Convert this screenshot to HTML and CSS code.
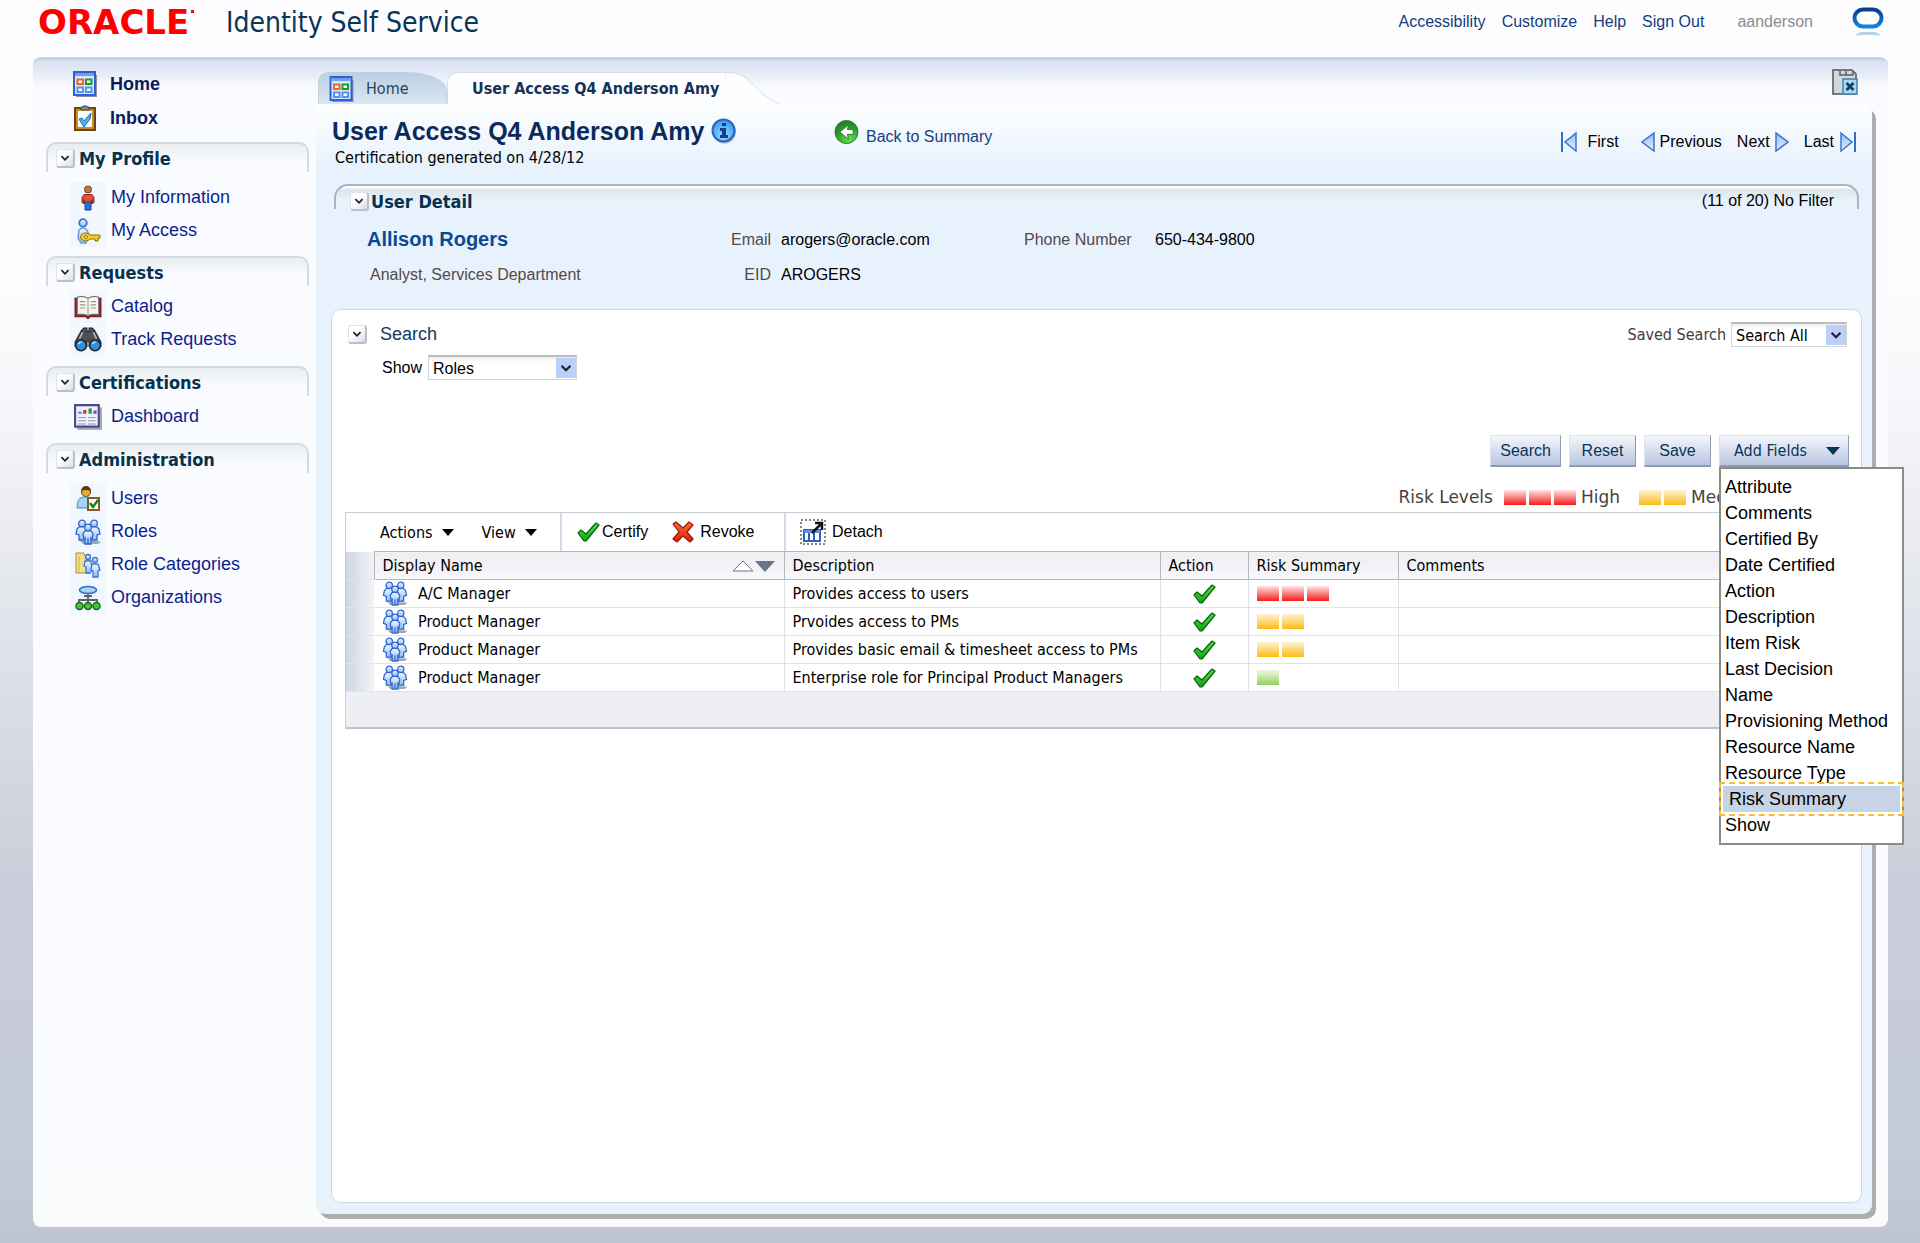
FILE: index.html
```
<!DOCTYPE html>
<html lang="en">
<head>
    <meta charset="UTF-8">
    <meta name="viewport" content="width=device-width, initial-scale=1.0">
    <title>Identity Self Service</title>
    <link rel="stylesheet" href="styles.css">
</head>
<body>
    <!-- Icon sprite -->
    <svg class="sprite" aria-hidden="true">
        <defs>
            <linearGradient id="g-blue" x1="0" y1="0" x2="0" y2="1"><stop offset="0" stop-color="#8fbcf5"/><stop offset="1" stop-color="#e6f2ff"/></linearGradient>
            <linearGradient id="g-person" x1="0" y1="0" x2="0" y2="1"><stop offset="0" stop-color="#f2f8ff"/><stop offset="1" stop-color="#8db8f5"/></linearGradient>
            <linearGradient id="g-green" x1="0" y1="0" x2="0" y2="1"><stop offset="0" stop-color="#56e04a"/><stop offset="1" stop-color="#0aa810"/></linearGradient>
            <linearGradient id="g-red" x1="0" y1="0" x2="0" y2="1"><stop offset="0" stop-color="#ff6a3c"/><stop offset="1" stop-color="#d91e05"/></linearGradient>
            <linearGradient id="g-ring" x1="0" y1="0" x2="0" y2="1"><stop offset="0" stop-color="#0a3f90"/><stop offset="1" stop-color="#1283e0"/></linearGradient>
            <radialGradient id="g-info" cx=".5" cy=".7" r=".7"><stop offset="0" stop-color="#8fdcff"/><stop offset="1" stop-color="#3a93ee"/></radialGradient>
            <radialGradient id="g-back" cx=".6" cy=".8" r=".9"><stop offset="0" stop-color="#6fdc58"/><stop offset=".6" stop-color="#259a2a"/><stop offset="1" stop-color="#2d6e2e"/></radialGradient>
        </defs>
        <symbol id="i-chevron" viewBox="0 0 18 18"><path d="M5 7l4 4 4-4" fill="none" stroke="#222" stroke-width="2"/></symbol>
        <symbol id="i-home" viewBox="0 0 24 26">
            <path d="M3 4h21v22H3z" fill="#8d93a3"/>
            <path d="M1 1h21v23H1z" fill="#d9e7fd" stroke="#2a62d2" stroke-width="2"/>
            <path d="M2 2h19v3H2z" fill="#6d9df0"/>
            <path d="M4.500 8.500h5.500v4.500H4.500z" fill="#fff" stroke="#f0641e" stroke-width="2"/>
            <path d="M13 8.500h5.500v4.500H13z" fill="#fff" stroke="#1f9a28" stroke-width="2"/>
            <path d="M4.500 16.500h5.500v4.500H4.500zM13 16.500h5.500v4.500H13z" fill="#fff" stroke="#5b8ff0" stroke-width="2"/>
        </symbol>
        <symbol id="i-inbox" viewBox="0 0 24 26">
            <path d="M2 3h20v22H2z" fill="#c98a2c" stroke="#6b4512" stroke-width="2"/>
            <path d="M5 6h14v16H5z" fill="#fbfdff"/>
            <path d="M8 5V2h2V1h4v1h2v3z" fill="#7f858d" stroke="#4a4e55"/>
            <path d="M6 14l3-1 2 3 7-8-1 6-6 8z" fill="#4fb0ea" stroke="#1c6fb5"/>
        </symbol>
        <symbol id="i-person" viewBox="0 0 24 26">
            <circle cx="12" cy="4.500" r="3.500" fill="#c07c3c" stroke="#6b3b16"/>
            <path d="M8 9.500h8l2 3v5l-2 1v-4 4H8v-4 4l-2-1v-5z" fill="#e0503a" stroke="#8f2612"/>
            <path d="M9 17h6v8H9z" fill="#2b6fd0" stroke="#1a468c"/>
        </symbol>
        <symbol id="i-key" viewBox="0 0 26 26">
            <circle cx="8" cy="5" r="3.800" fill="url(#g-person)" stroke="#3e74c9" stroke-width="1.800"/>
            <path d="M4 12q4-4 8 0l2 5-3 8H6l-3-5z" fill="url(#g-person)" stroke="#6a9be2" stroke-width="1.500"/>
            <path d="M15 17h10v3h-2v3h-3v-2h-5a5 4 0 1 1 0-4z" fill="#f4cf1c" stroke="#8d6b06"/>
            <circle cx="11" cy="19" r="1.500" fill="#fff" stroke="#8d6b06"/>
        </symbol>
        <symbol id="i-book" viewBox="0 0 26 24">
            <path d="M1 4h2l10 2 10-2h2v17H15l-2 2-2-2H1z" fill="#a8222a" stroke="#6f1218"/>
            <path d="M3 3q6-2 10 1 4-3 10-1v16q-6-1-10 1-4-2-10-1z" fill="#f7f6f1" stroke="#6a6660"/>
            <path d="M13 4v16M5.500 7h5M5.500 10h5M5.500 13h5M15.500 7h5M15.500 10h5M15.500 13h5" stroke="#9a968e"/>
        </symbol>
        <symbol id="i-binoculars" viewBox="0 0 26 24">
            <path d="M7 3l2-2h3v3h2V1h3l2 2 6 11v4H14v-5h-2v5H1v-4z" fill="#4b4f56" stroke="#1e2024"/>
            <path d="M8 5l-3 6M18 5l3 6" stroke="#b3b8c0" stroke-width="1.500"/>
            <circle cx="6.500" cy="17" r="5" fill="#2f8fe6" stroke="#26292e" stroke-width="1.500"/>
            <circle cx="19.500" cy="17" r="5" fill="#2f8fe6" stroke="#26292e" stroke-width="1.500"/>
            <path d="M4 16a3 3 0 0 1 3-2M17 16a3 3 0 0 1 3-2" fill="none" stroke="#a8dcff" stroke-width="1.500"/>
        </symbol>
        <symbol id="i-dashboard" viewBox="0 0 26 24">
            <path d="M3 3h23v21H3z" fill="#a9a9b2"/>
            <path d="M1 1h22v20H1z" fill="#eef0fb" stroke="#4d4a8c" stroke-width="2"/>
            <path d="M4 8h3" stroke="#3a8be0" stroke-width="2"/><path d="M8.500 5.500h3V9h-3z" fill="#d63c1e"/><path d="M13.500 4h3v5h-3z" fill="#2c9c38"/><path d="M18 6h3v3h-3z" fill="#7a4ac8"/>
            <path d="M4 12.500h7M13 12.500h7M4 15.500h7M13 15.500h7M4 18.500h7M13 18.500h7" stroke="#9396bd"/>
        </symbol>
        <symbol id="i-user" viewBox="0 0 26 26">
            <circle cx="11" cy="6" r="4.500" fill="#f0a636" stroke="#6e3f12"/>
            <path d="M6 5a5 5 0 0 1 10 0q-5-2-10 0z" fill="#5e3710"/>
            <path d="M2 22q0-10 6-11h6l3 3v8z" fill="#a5d3f7" stroke="#3f8bcb"/>
            <path d="M13 12h11v12H13z" fill="#fff" stroke="#8a5a1c" stroke-width="2"/>
            <path d="M15 17l3 4 5-7" fill="none" stroke="#14851c" stroke-width="2.500"/>
        </symbol>
        <symbol id="i-roles" viewBox="0 0 26 26">
            <path d="M5 22h18l3 1-3 2H8z" fill="#a4a6b0"/>
            <g fill="url(#g-person)" stroke="#2c66cf" stroke-width="1.300">
                <path d="M4 8q3-1 6 0l2 4-2 9H4v-5l-3-1 1-5z"/>
                <path d="M22 8q-3-1-6 0l-2 4 2 9h6v-5l3-1-1-5z"/>
                <circle cx="7" cy="4.500" r="3.300"/><circle cx="19" cy="4.500" r="3.300"/>
                <path d="M10 12q3-1 6 0l2 3-1 5-1-1v6h-6v-6l-1 1-1-5z"/>
                <circle cx="13" cy="8.500" r="3.300"/>
                <path d="M13 19v6"/>
            </g>
        </symbol>
        <symbol id="i-category" viewBox="0 0 26 26">
            <path d="M1 3V1h8v2h6v18H1z" fill="#f1e089" stroke="#a8923a"/>
            <path d="M4 4v17" stroke="#cdb85a"/>
            <g fill="url(#g-person)" stroke="#3a74d2" stroke-width="1.300">
                <circle cx="13" cy="5" r="2.500"/><path d="M10 9h6l1 9-2 3h-4v-6l-2-1z"/>
                <circle cx="20" cy="8" r="2.500"/><path d="M17 12h6l2 6-2 1v6h-5v-6l-2-1z"/>
            </g>
        </symbol>
        <symbol id="i-org" viewBox="0 0 26 26">
            <path d="M13 8v10M4 19v-4h18v4M9 11h8" fill="none" stroke="#5e6268" stroke-width="1.800"/>
            <ellipse cx="13" cy="5" rx="8.500" ry="3.500" fill="#a9cffb" stroke="#2f6cc4" stroke-width="1.500"/>
            <g fill="#4ec13f" stroke="#146b16" stroke-width="1.500"><circle cx="4.500" cy="21" r="3.500"/><circle cx="13" cy="21" r="3.500"/><circle cx="21.500" cy="21" r="3.500"/></g>
        </symbol>
        <symbol id="i-info" viewBox="0 0 26 26">
            <circle cx="13.500" cy="14" r="11.500" fill="#b4b9c4"/>
            <circle cx="12.500" cy="12.500" r="11" fill="url(#g-info)" stroke="#2468c0" stroke-width="2"/>
            <path d="M11 5h4v3h-4zM9 10h6v7h2v3H9v-3h2v-4H9z" fill="#12408e"/>
        </symbol>
        <symbol id="i-back" viewBox="0 0 26 26">
            <circle cx="13" cy="13" r="12" fill="url(#g-back)" stroke="#2b7f2c"/>
            <path d="M15 5.500L6 13l9 7.500-1-5h6v-5h-6z" fill="#fff" stroke="#1d7a22"/>
        </symbol>
        <symbol id="i-first" viewBox="0 0 18 22"><path d="M2 1v20" stroke="#2f6fd0" stroke-width="2"/><path d="M16 2v18L5 11z" fill="url(#g-blue)" stroke="#3a74cf" stroke-width="1.500"/></symbol>
        <symbol id="i-prev" viewBox="0 0 14 22"><path d="M13 2v18L1 11z" fill="url(#g-blue)" stroke="#3a74cf" stroke-width="1.500"/></symbol>
        <symbol id="i-next" viewBox="0 0 14 22"><path d="M1 2v18l12-9z" fill="url(#g-blue)" stroke="#3a74cf" stroke-width="1.500"/></symbol>
        <symbol id="i-last" viewBox="0 0 18 22"><path d="M16 1v20" stroke="#2f6fd0" stroke-width="2"/><path d="M2 2v18l11-9z" fill="url(#g-blue)" stroke="#3a74cf" stroke-width="1.500"/></symbol>
        <symbol id="i-check" viewBox="0 0 24 20"><path d="M2 11l3-3 5 4 10-11 3 2L10 19H8z" fill="url(#g-green)" stroke="#0b5f10" stroke-width="1.200" stroke-linejoin="round"/></symbol>
        <symbol id="i-cross" viewBox="0 0 22 22"><path d="M1 3l3-2 7 6 6-6 4 3-6 7 6 7-3 3-7-6-6 6-4-3 6-7z" fill="url(#g-red)" stroke="#a01505" stroke-width="1.200" stroke-linejoin="round"/></symbol>
        <symbol id="i-detach" viewBox="0 0 26 26">
            <path d="M1 1h24v24H1z" fill="none" stroke="#111" stroke-dasharray="2 2"/>
            <path d="M4 11h16v11H4z" fill="#fff" stroke="#2b62c8" stroke-width="2"/><path d="M4 11h16v3H4z" fill="#5c92ea"/>
            <path d="M9 14v8M14 14v8M4 22h16" stroke="#2b62c8" stroke-width="2"/>
            <path d="M12 14l9-9M15 4h7v7" fill="none" stroke="#111" stroke-width="2.500"/>
        </symbol>
        <symbol id="i-close" viewBox="0 0 26 26">
            <path d="M1 1h19l4 4v20H1z" fill="#d5d7da" stroke="#4c5560" stroke-width="1.500"/>
            <path d="M8 2v4h13V2M14 2v4" fill="none" stroke="#59616b" stroke-width="1.500"/>
            <path d="M11 10h14v15H11z" fill="#a9d7f4" stroke="#4181b4" stroke-width="1.500"/>
            <path d="M14.500 14l7 7M21.500 14l-7 7" stroke="#123f6b" stroke-width="2.800"/>
        </symbol>
    </svg>

    <header class="header">
        <div class="logo">ORACLE<span class="logo-dot"></span></div>
        <h1 class="app-title">Identity Self Service</h1>
        <nav class="top-links">
            <a href="#">Accessibility</a>
            <a href="#">Customize</a>
            <a href="#">Help</a>
            <a href="#">Sign Out</a>
        </nav>
        <span class="user-name">aanderson</span>
        <svg class="ring" viewBox="0 0 32 32">
            <rect x="2.500" y="3.500" width="27" height="17" rx="8.500" fill="#fff" stroke="url(#g-ring)" stroke-width="4"/>
            <path d="M3 30q3-4 8-4h10q5 0 8 4-3-1-8-1H11q-5 0-8 1z" fill="#b5d2e6"/>
        </svg>
    </header>

    <div class="shell">
        <aside class="sidebar">
            <ul class="nav-list nav-main">
                <li><a href="#"><svg class="nav-icon"><use href="#i-home"/></svg>Home</a></li>
                <li><a href="#"><svg class="nav-icon"><use href="#i-inbox"/></svg>Inbox</a></li>
            </ul>

            <section class="nav-section roomy">
                <h2 class="section-title"><button class="toggle" aria-label="Collapse My Profile"><svg><use href="#i-chevron"/></svg></button>My Profile</h2>
                <ul class="nav-list">
                    <li><a href="#"><svg class="nav-icon tinted"><use href="#i-person"/></svg>My Information</a></li>
                    <li><a href="#"><svg class="nav-icon tinted"><use href="#i-key"/></svg>My Access</a></li>
                </ul>
            </section>

            <section class="nav-section">
                <h2 class="section-title"><button class="toggle" aria-label="Collapse Requests"><svg><use href="#i-chevron"/></svg></button>Requests</h2>
                <ul class="nav-list">
                    <li><a href="#"><svg class="nav-icon tinted"><use href="#i-book"/></svg>Catalog</a></li>
                    <li><a href="#"><svg class="nav-icon tinted"><use href="#i-binoculars"/></svg>Track Requests</a></li>
                </ul>
            </section>

            <section class="nav-section">
                <h2 class="section-title"><button class="toggle" aria-label="Collapse Certifications"><svg><use href="#i-chevron"/></svg></button>Certifications</h2>
                <ul class="nav-list">
                    <li><a href="#"><svg class="nav-icon"><use href="#i-dashboard"/></svg>Dashboard</a></li>
                </ul>
            </section>

            <section class="nav-section roomy">
                <h2 class="section-title"><button class="toggle" aria-label="Collapse Administration"><svg><use href="#i-chevron"/></svg></button>Administration</h2>
                <ul class="nav-list">
                    <li><a href="#"><svg class="nav-icon tinted"><use href="#i-user"/></svg>Users</a></li>
                    <li><a href="#"><svg class="nav-icon tinted"><use href="#i-roles"/></svg>Roles</a></li>
                    <li><a href="#"><svg class="nav-icon tinted"><use href="#i-category"/></svg>Role Categories</a></li>
                    <li><a href="#"><svg class="nav-icon tinted"><use href="#i-org"/></svg>Organizations</a></li>
                </ul>
            </section>
        </aside>

        <main class="main">
            <div class="tabs">
                <a class="tab" href="#"><svg class="tab-icon"><use href="#i-home"/></svg>Home</a>
                <a class="tab active" href="#">User Access Q4 Anderson Amy</a>
                <svg class="tab-tail" viewBox="0 0 56 33"><path d="M0 .5C16 .5 20 5 28 13S46 31 56 32.500H0z" fill="#fdfeff"/><path d="M0 .5C16 .5 20 5 28 13S46 31 56 32.500" fill="none" stroke="#d3dde8"/></svg>
                <button class="icon-btn" aria-label="Close tab"><svg><use href="#i-close"/></svg></button>
            </div>

            <div class="pane">
                <div class="pane-head">
                    <div>
                        <h2 class="page-title">User Access Q4 Anderson Amy <svg><use href="#i-info"/></svg></h2>
                        <p class="subtitle">Certification generated on 4/28/12</p>
                    </div>
                    <a class="back" href="#"><svg><use href="#i-back"/></svg><span>Back to Summary</span></a>
                    <nav class="pager">
                        <a class="pager-first" href="#"><svg class="wide"><use href="#i-first"/></svg>First</a>
                        <a href="#"><svg><use href="#i-prev"/></svg>Previous</a>
                        <a href="#">Next<svg><use href="#i-next"/></svg></a>
                        <a href="#">Last<svg class="wide"><use href="#i-last"/></svg></a>
                    </nav>
                </div>

                <section class="detail">
                    <div class="detail-head">
                        <button class="toggle" aria-label="Collapse User Detail"><svg><use href="#i-chevron"/></svg></button>
                        <h3>User Detail</h3>
                        <span class="counter">(11 of 20) No Filter</span>
                    </div>
                    <div class="detail-grid">
                        <strong class="person">Allison Rogers</strong>
                        <span class="label">Email</span><span>arogers@oracle.com</span>
                        <span class="label phone">Phone Number</span><span>650-434-9800</span>
                        <span class="role">Analyst, Services Department</span>
                        <span class="label">EID</span><span>AROGERS</span>
                    </div>
                </section>

                <section class="card">
                    <div class="search-row">
                        <button class="toggle" aria-label="Collapse Search"><svg><use href="#i-chevron"/></svg></button>
                        <h3>Search</h3>
                        <label for="saved">Saved Search</label>
                        <span class="select saved">
                            <select id="saved"><option>Search All</option></select>
                            <svg><use href="#i-chevron"/></svg>
                        </span>
                    </div>
                    <div class="show-row">
                        <label for="show">Show</label>
                        <span class="select">
                            <select id="show"><option>Roles</option></select>
                            <svg><use href="#i-chevron"/></svg>
                        </span>
                    </div>

                    <div class="actions">
                        <button class="btn">Search</button>
                        <button class="btn">Reset</button>
                        <button class="btn">Save</button>
                        <div class="dropdown">
                            <button class="btn btn-menu" aria-expanded="true">Add Fields <i class="arrow"></i></button>
                            <ul class="menu">
                                <li><button>Attribute</button></li>
                                <li><button>Comments</button></li>
                                <li><button>Certified By</button></li>
                                <li><button>Date Certified</button></li>
                                <li><button>Action</button></li>
                                <li><button>Description</button></li>
                                <li><button>Item Risk</button></li>
                                <li><button>Last Decision</button></li>
                                <li><button>Name</button></li>
                                <li><button>Provisioning Method</button></li>
                                <li><button>Resource Name</button></li>
                                <li><button>Resource Type</button></li>
                                <li><button class="selected">Risk Summary</button></li>
                                <li><button>Show</button></li>
                            </ul>
                        </div>
                    </div>

                    <div class="legend">
                        <span>Risk Levels</span>
                        <span class="risk high"><i></i><i></i><i></i></span><span>High</span>
                        <span class="risk medium"><i></i><i></i></span><span>Medium</span>
                    </div>

                    <div class="grid-panel">
                        <div class="toolbar">
                            <div class="tool-group menus">
                                <button>Actions <i class="arrow"></i></button>
                                <button>View <i class="arrow"></i></button>
                            </div>
                            <div class="tool-group decisions">
                                <button><svg class="check"><use href="#i-check"/></svg>Certify</button>
                                <button><svg class="cross"><use href="#i-cross"/></svg>Revoke</button>
                            </div>
                            <div class="tool-group">
                                <button><svg class="detach"><use href="#i-detach"/></svg>Detach</button>
                            </div>
                        </div>
                        <table>
                            <colgroup>
                                <col class="c-handle"><col class="c-name"><col class="c-desc"><col class="c-action"><col class="c-risk"><col>
                            </colgroup>
                            <thead>
                                <tr>
                                    <td class="handle"></td>
                                    <th><div class="sortable">Display Name
                                        <svg class="sort" viewBox="0 0 44 12"><path d="M1 11L11 1l10 10z" fill="#fff" stroke="#6a7585"/><path d="M23 1h20L33 12z" fill="#67758a"/></svg></div></th>
                                    <th>Description</th>
                                    <th>Action</th>
                                    <th>Risk Summary</th>
                                    <th>Comments</th>
                                </tr>
                            </thead>
                            <tbody>
                                <tr>
                                    <td class="handle"></td>
                                    <td><div class="name"><svg><use href="#i-roles"/></svg>A/C Manager</div></td>
                                    <td>Provides access to users</td>
                                    <td class="center"><svg class="check"><use href="#i-check"/></svg></td>
                                    <td><span class="risk high"><i></i><i></i><i></i></span></td>
                                    <td></td>
                                </tr>
                                <tr>
                                    <td class="handle"></td>
                                    <td><div class="name"><svg><use href="#i-roles"/></svg>Product Manager</div></td>
                                    <td>Prvoides access to PMs</td>
                                    <td class="center"><svg class="check"><use href="#i-check"/></svg></td>
                                    <td><span class="risk medium"><i></i><i></i></span></td>
                                    <td></td>
                                </tr>
                                <tr>
                                    <td class="handle"></td>
                                    <td><div class="name"><svg><use href="#i-roles"/></svg>Product Manager</div></td>
                                    <td>Provides basic email &amp; timesheet access to PMs</td>
                                    <td class="center"><svg class="check"><use href="#i-check"/></svg></td>
                                    <td><span class="risk medium"><i></i><i></i></span></td>
                                    <td></td>
                                </tr>
                                <tr>
                                    <td class="handle"></td>
                                    <td><div class="name"><svg><use href="#i-roles"/></svg>Product Manager</div></td>
                                    <td>Enterprise role for Principal Product Managers</td>
                                    <td class="center"><svg class="check"><use href="#i-check"/></svg></td>
                                    <td><span class="risk low"><i></i></span></td>
                                    <td></td>
                                </tr>
                            </tbody>
                        </table>
                        <div class="grid-footer"></div>
                    </div>
                </section>
            </div>
        </main>
    </div>
</body>
</html>
```
FILE: styles.css
```
* {
    margin: 0;
    padding: 0;
    box-sizing: border-box;
}

:root {
    --arial: "Liberation Sans", Arial, sans-serif;
    --tahoma: "DejaVu Sans Condensed", Tahoma, sans-serif;
}

body {
    display: flex;
    flex-direction: column;
    min-height: 100vh;
    font-family: var(--arial);
    font-size: 16px;
    color: #000;
    background: linear-gradient(#fdfdff 22%, #f5f6f9 33%, #c8cdd9 72%, #c6cbd8 92%, #bfc4d2 100%);
}

ul {
    list-style: none;
}

a {
    color: #0b2f87;
    text-decoration: none;
}

button, select {
    font: inherit;
    color: inherit;
    border: none;
    background: none;
    cursor: pointer;
}

svg {
    display: block;
    flex: none;
}

.sprite {
    position: absolute;
    width: 0;
    height: 0;
}

/* Header */
.header {
    display: flex;
    align-items: center;
    height: 57px;
    padding: 0 36px 13px 38px;
}

.logo {
    display: flex;
    width: 188px;
    font-family: "DejaVu Sans", Verdana, sans-serif;
    font-size: 34px;
    font-weight: bold;
    color: #f00;
}

.logo-dot {
    width: 3px;
    height: 3px;
    margin: 8px 0 0 2px;
    background: #f00;
}

.app-title {
    font-family: var(--tahoma);
    font-size: 28px;
    font-weight: normal;
    color: #0a3557;
}

.top-links {
    display: flex;
    gap: 16px;
    margin-left: auto;
}

.top-links a {
    color: #143d80;
}

.user-name {
    margin: 0 39px 0 33px;
    color: #8c8c8c;
}

.ring {
    width: 32px;
    height: 32px;
}

/* Shell */
.shell {
    display: flex;
    flex: 1;
    margin: 0 32px 16px 33px;
    border-top: 3px solid #c6d3e1;
    border-radius: 8px;
    background: linear-gradient(#d5def0, #fafbfe 28px, #fafbfe 95%, #fafbfa);
}

.sidebar {
    width: 283px;
    flex: none;
    padding: 7px 7px 0 13px;
}

.nav-list a {
    display: flex;
    align-items: center;
    gap: 5px;
    height: 33px;
    padding-left: 24px;
    font-size: 18px;
    color: #0a1f8f;
}

.nav-icon {
    width: 36px;
    height: 32px;
    padding: 3px 4px;
}

.tinted {
    background: #f0f7fe;
}

.nav-main {
    padding-bottom: 7px;
}

.nav-main a {
    gap: 7px;
    height: 34px;
    padding-left: 21px;
    font-weight: bold;
    color: #0a1a5c;
}

.nav-section {
    padding-bottom: 10px;
}

.section-title {
    display: flex;
    align-items: center;
    gap: 4px;
    height: 30px;
    margin-bottom: 4px;
    padding-left: 8px;
    border: 2px solid #d3dae5;
    border-bottom: none;
    border-radius: 10px 10px 0 0;
    background: linear-gradient(#e9eef1, #fafbfe 18px);
    font-family: var(--tahoma);
    font-size: 18px;
    color: #06324f;
}

.roomy {
    padding-bottom: 9px;
}

.roomy .section-title {
    margin-bottom: 9px;
}

.toggle {
    width: 19px;
    height: 19px;
    border: 1px solid #dfe3ea;
    border-right: 2px solid #b9bfcd;
    border-bottom: 2px solid #b9bfcd;
    border-radius: 3px;
    background: linear-gradient(135deg, #fff 40%, #d9dde6);
}

.toggle svg {
    width: 16px;
    height: 16px;
}

/* Tabs */
.main {
    display: flex;
    flex-direction: column;
    flex: 1;
    min-width: 0;
    padding: 0 16px 13px 0;
}

.tabs {
    display: flex;
    align-items: flex-end;
    height: 44px;
    padding: 0 14px 0 2px;
}

.tab {
    display: flex;
    align-items: center;
    gap: 12px;
    width: 129px;
    height: 32px;
    padding-left: 10px;
    border: 1px solid #c2d2e3;
    border-bottom: none;
    border-radius: 10px 42px 0 0 / 10px 18px 0 0;
    background: linear-gradient(#bccfe2, #dbe7f3);
    font-family: var(--tahoma);
    color: #27435f;
}

.tab-icon {
    width: 25px;
    height: 26px;
}

.tab.active {
    width: auto;
    padding: 0 6px 0 24px;
    font-weight: bold;
    color: #173256;
    border: 1px solid #d3dde8;
    border-width: 1px 0 0 1px;
    border-radius: 10px 0 0 0;
    background: #fdfeff;
}

.tab-tail {
    width: 56px;
    height: 32px;
}

.icon-btn {
    align-self: center;
    margin-left: auto;
}

.icon-btn svg {
    width: 26px;
    height: 26px;
}

/* Pane */
.pane {
    display: flex;
    flex-direction: column;
    flex: 1;
    padding: 0 10px 11px 15px;
    border-radius: 0 10px 10px 10px;
    background: linear-gradient(#fdfeff, #e8f2fd 62px);
    box-shadow: 4px 5px 0 #adadad;
}

.pane-head {
    display: grid;
    grid-template-columns: 502px 1fr auto;
    height: 80px;
    padding: 12px 5px 0 1px;
}

.page-title {
    display: flex;
    align-items: center;
    gap: 7px;
    line-height: 30px;
    font-size: 25px;
    color: #0b2a5b;
}

.page-title svg {
    width: 26px;
    height: 26px;
}

.subtitle {
    padding-left: 3px;
    line-height: 23px;
    font-family: var(--tahoma);
}

.back {
    display: flex;
    gap: 7px;
    padding-top: 3px;
    color: #16407f;
}

.back svg {
    width: 25px;
    height: 26px;
}

.back span {
    padding-top: 9px;
}

.pager {
    display: flex;
    gap: 15px;
    height: 52px;
}

.pager a {
    display: flex;
    align-items: center;
    gap: 5px;
    color: #000;
}

.pager .pager-first {
    gap: 9px;
    margin-right: 7px;
}

.pager svg {
    width: 14px;
    height: 22px;
}

.pager .wide {
    width: 18px;
}

/* User detail */
.detail {
    margin: 0 3px;
}

.detail-head {
    display: flex;
    align-items: center;
    height: 25px;
    padding: 7px 23px 0 14px;
    border: 2px solid #aab4c8;
    border-bottom: none;
    border-radius: 14px 14px 0 0;
    background: linear-gradient(#fff 2px, #dde5ea 3px, #e8f2fd 15px);
}

.detail-head h3 {
    padding-left: 2px;
    font-family: var(--tahoma);
    font-size: 18px;
    color: #06324f;
}

.counter {
    margin-left: auto;
}

.detail-grid {
    display: grid;
    grid-template-columns: 340px 54px 233px 121px 1fr;
    column-gap: 10px;
    grid-auto-rows: 35px;
    align-items: center;
    padding: 13px 0 17px 33px;
}

.person {
    font-size: 20px;
    color: #0a4a94;
}

.label, .role {
    color: #54494a;
}

.role {
    padding-left: 3px;
}

.label {
    text-align: right;
}

.label.phone {
    text-align: left;
}

/* Search card */
.card {
    flex: 1;
    padding: 11px 12px 12px;
    border: 1px solid #c9d8e9;
    border-radius: 10px;
    background: #fff;
}

.search-row, .show-row {
    display: flex;
    align-items: center;
    height: 27px;
}

.search-row {
    padding: 0 2px 0 4px;
    font-family: var(--tahoma);
}

.search-row h3 {
    padding-left: 13px;
    font-family: var(--arial);
    font-size: 18px;
    font-weight: normal;
    color: #14375a;
}

.search-row label {
    margin-left: auto;
    color: #443c3c;
}

.show-row {
    margin-top: 6px;
    padding-left: 38px;
}

.select {
    position: relative;
    width: 149px;
    margin-left: 6px;
}

.select.saved {
    width: 116px;
    margin-left: 5px;
}

.select select {
    display: block;
    width: 100%;
    height: 25px;
    padding-left: 4px;
    border: 1px solid #d0d3d8;
    border-top: 2px solid #bcbcbc;
    appearance: none;
    background: linear-gradient(#eee, #fff 5px);
}

.select svg {
    position: absolute;
    top: 3px;
    right: 1px;
    width: 20px;
    height: 20px;
    background: #bccffa;
    pointer-events: none;
}

.actions {
    display: flex;
    justify-content: flex-end;
    gap: 8px;
    margin-top: 54px;
}

.btn {
    display: block;
    height: 32px;
    min-width: 67px;
    padding: 0 9px;
    color: #0c3355;
    border: 1px solid #dfe3ea;
    border-right: 1px solid #8d9ab0;
    border-bottom: 2px solid #8d9ab0;
    background: linear-gradient(#f3f6fb, #b9c6e2);
}

.btn-menu {
    display: flex;
    align-items: center;
    justify-content: space-between;
    width: 130px;
    padding: 0 8px 0 14px;
    font-family: var(--tahoma);
}

.arrow {
    display: inline-block;
    border: 7px solid transparent;
    border-top: 8px solid currentColor;
    border-bottom: none;
}

.dropdown {
    position: relative;
}

.menu {
    position: absolute;
    top: 100%;
    left: 0;
    z-index: 10;
    width: 185px;
    padding: 5px 2px;
    border: 2px solid #8a8d84;
    background: #fff;
}

.menu button {
    display: block;
    width: 100%;
    height: 26px;
    padding-left: 2px;
    font-size: 18px;
    text-align: left;
    white-space: nowrap;
}

.menu .selected {
    padding-left: 6px;
    background: #c7d4e5;
    outline: 2px dashed #f9bd2e;
    outline-offset: 2px;
}

.legend {
    display: flex;
    align-items: center;
    justify-content: flex-end;
    gap: 5px;
    height: 24px;
    margin: 18px 0 3px;
    padding-right: 90px;
    font-family: "DejaVu Sans", Verdana, sans-serif;
    font-size: 17px;
    color: #4a4040;
}

.legend .high {
    margin-left: 6px;
}

.legend .medium {
    margin-left: 14px;
}

.risk {
    display: flex;
    gap: 3px;
}

.risk i {
    width: 22px;
    height: 15px;
}

.high i {
    background: linear-gradient(#ffe5e5, #f61a1a);
}

.medium i {
    background: linear-gradient(#fff2d5, #fbbd17);
}

.low i {
    background: linear-gradient(#eef8e4, #95d25b);
}

/* Results grid */
.grid-panel {
    margin-left: 1px;
    border: 1px solid #cacdd1;
    border-bottom: 2px solid #c0c2c6;
}

.toolbar {
    display: flex;
    height: 38px;
}

.tool-group {
    display: flex;
    align-items: center;
    gap: 24px;
    padding-left: 14px;
}

.tool-group + .tool-group {
    border-left: 2px solid #d2dbea;
}

.menus {
    gap: 28px;
    width: 214px;
    padding-left: 34px;
    font-family: var(--tahoma);
}

.decisions {
    width: 224px;
}

.tool-group button {
    display: flex;
    align-items: center;
    gap: 6px;
    white-space: nowrap;
}

.menus button {
    gap: 9px;
}

.menus .arrow {
    border-width: 7px 6px 0;
}

.decisions button:first-child {
    gap: 2px;
}

.check {
    width: 24px;
    height: 20px;
}

.cross {
    width: 22px;
    height: 22px;
}

.detach {
    width: 26px;
    height: 26px;
}

table {
    width: 100%;
    table-layout: fixed;
    border-collapse: collapse;
    font-family: var(--tahoma);
}

.c-handle {
    width: 28px;
}

.c-name {
    width: 410px;
}

.c-desc {
    width: 376px;
}

.c-action {
    width: 88px;
}

.c-risk {
    width: 150px;
}

th, td {
    height: 28px;
    padding: 0 8px;
    border-right: 1px solid #e0e2e6;
    border-bottom: 1px solid #e3e4e6;
    font-weight: normal;
    text-align: left;
    white-space: nowrap;
}

th {
    border: 1px solid #b4b7bd;
    background: linear-gradient(#ededf2, #f8f8fb);
}

.handle {
    border-right: none;
    background: linear-gradient(90deg, #ced5e2, #f1f3f7);
}

.sortable {
    display: flex;
    align-items: center;
    justify-content: space-between;
}

.sort {
    width: 44px;
    height: 12px;
}

.name {
    display: flex;
    align-items: center;
    gap: 10px;
}

.name svg {
    width: 26px;
    height: 25px;
}

.center .check {
    margin: 0 auto;
}

.grid-footer {
    height: 35px;
    background: #edeff5;
}
```
